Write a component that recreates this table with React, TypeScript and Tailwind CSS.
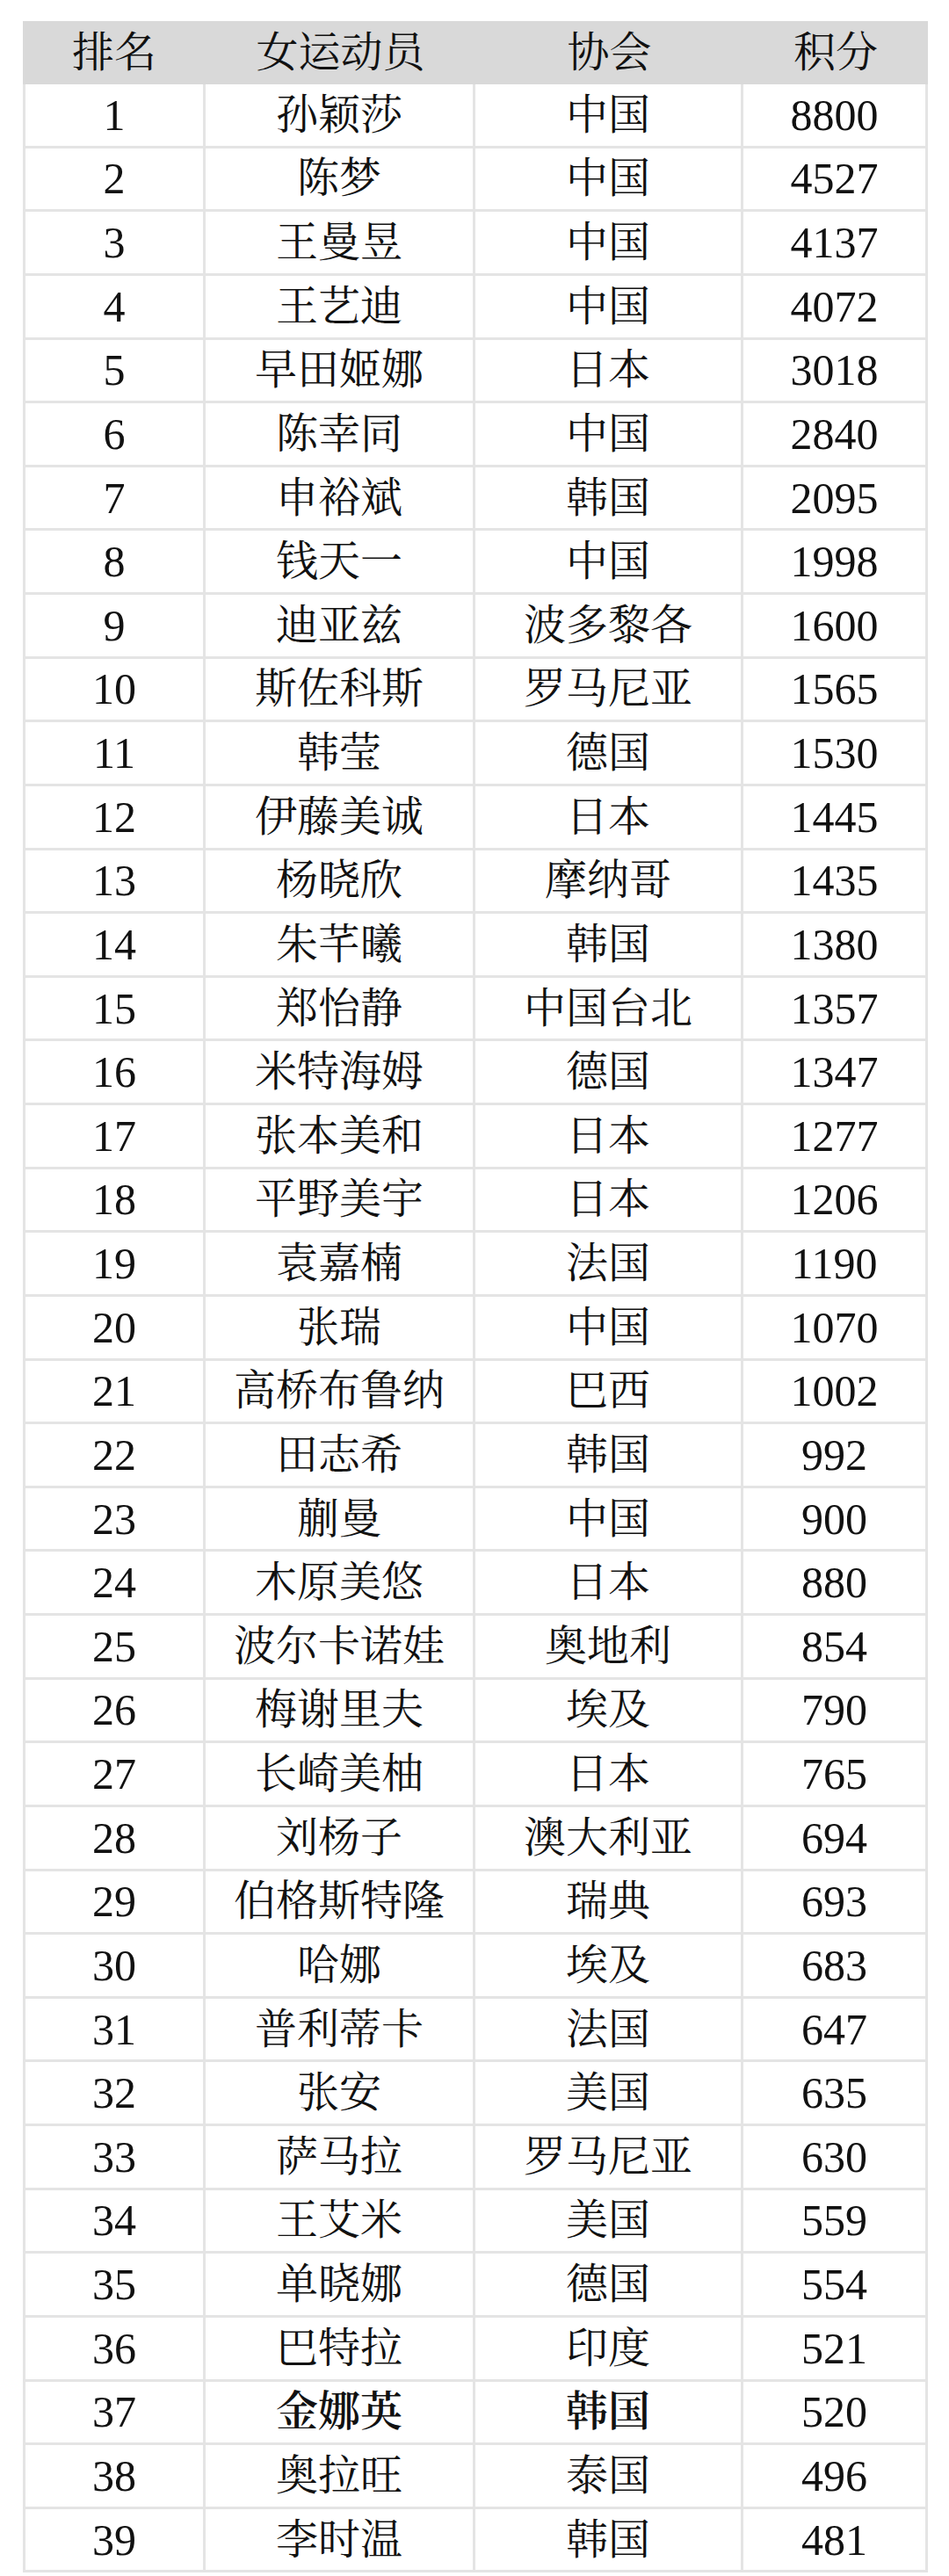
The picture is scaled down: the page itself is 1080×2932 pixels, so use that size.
import React from "react";

type Row = [number, string, string, number];

const rows: Row[] = [
  [1, "孙颖莎", "中国", 8800],
  [2, "陈梦", "中国", 4527],
  [3, "王曼昱", "中国", 4137],
  [4, "王艺迪", "中国", 4072],
  [5, "早田姬娜", "日本", 3018],
  [6, "陈幸同", "中国", 2840],
  [7, "申裕斌", "韩国", 2095],
  [8, "钱天一", "中国", 1998],
  [9, "迪亚兹", "波多黎各", 1600],
  [10, "斯佐科斯", "罗马尼亚", 1565],
  [11, "韩莹", "德国", 1530],
  [12, "伊藤美诚", "日本", 1445],
  [13, "杨晓欣", "摩纳哥", 1435],
  [14, "朱芊曦", "韩国", 1380],
  [15, "郑怡静", "中国台北", 1357],
  [16, "米特海姆", "德国", 1347],
  [17, "张本美和", "日本", 1277],
  [18, "平野美宇", "日本", 1206],
  [19, "袁嘉楠", "法国", 1190],
  [20, "张瑞", "中国", 1070],
  [21, "高桥布鲁纳", "巴西", 1002],
  [22, "田志希", "韩国", 992],
  [23, "蒯曼", "中国", 900],
  [24, "木原美悠", "日本", 880],
  [25, "波尔卡诺娃", "奥地利", 854],
  [26, "梅谢里夫", "埃及", 790],
  [27, "长崎美柚", "日本", 765],
  [28, "刘杨子", "澳大利亚", 694],
  [29, "伯格斯特隆", "瑞典", 693],
  [30, "哈娜", "埃及", 683],
  [31, "普利蒂卡", "法国", 647],
  [32, "张安", "美国", 635],
  [33, "萨马拉", "罗马尼亚", 630],
  [34, "王艾米", "美国", 559],
  [35, "单晓娜", "德国", 554],
  [36, "巴特拉", "印度", 521],
  [37, "金娜英", "韩国", 520],
  [38, "奥拉旺", "泰国", 496],
  [39, "李时温", "韩国", 481],
];

const font = {
  fontFamily:
    '"Liberation Serif", "Noto Serif CJK SC", "Noto Sans CJK SC", serif',
};

export default function App() {
  return (
    <div className="w-[1080px] h-[2932px] overflow-hidden bg-white pt-[24px] text-[#111]" style={font}>
      <div className="ml-[26px] w-[1030px]">
        <div className="grid grid-cols-[208px_307px_305px_210px] h-[72px] bg-[#d9d9d9] text-[48px] items-center text-center leading-none">
          <div>排名</div>
          <div>女运动员</div>
          <div>协会</div>
          <div>积分</div>
        </div>
        <div className="border-l-[3px] border-[#e4e4e4] w-[1030px]">
          {rows.map(([rank, name, assoc, pts]) => {
            const bold = rank === 37;
            return (
              <div
                key={rank}
                className="grid grid-cols-[205px_307px_305px_210px] h-[72.64px] text-center leading-none"
              >
                <div className="flex items-center justify-center border-r-[3px] border-b-[3px] border-[#e4e4e4] text-[50px]">
                  {rank}
                </div>
                <div
                  className={
                    "flex items-center justify-center border-r-[3px] border-b-[3px] border-[#e4e4e4] text-[48px] " +
                    (bold ? "font-semibold" : "")
                  }
                >
                  {name}
                </div>
                <div
                  className={
                    "flex items-center justify-center border-r-[3px] border-b-[3px] border-[#e4e4e4] text-[48px] " +
                    (bold ? "font-semibold" : "")
                  }
                >
                  {assoc}
                </div>
                <div className="flex items-center justify-center border-r-[3px] border-b-[3px] border-[#e4e4e4] text-[50px]">
                  {pts}
                </div>
              </div>
            );
          })}
        </div>
      </div>
    </div>
  );
}
